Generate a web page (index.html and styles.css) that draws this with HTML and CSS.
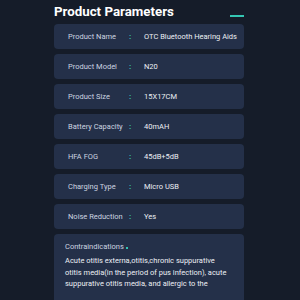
FILE: index.html
```html
<!DOCTYPE html>
<html lang="en">
<head>
    <meta charset="UTF-8">
    <meta name="viewport" content="width=device-width, initial-scale=1.0">
    <title>Product Parameters</title>
    <link rel="stylesheet" href="styles.css">
</head>
<body>
    <main class="params">
        <header class="params-head">
            <h1 class="params-title">Product Parameters</h1>
            <span class="params-dash"></span>
        </header>

        <ul class="param-list">
            <li class="param-row"><span class="param-label">Product Name</span><span class="param-sep">:</span><span class="param-value">OTC Bluetooth Hearing Aids</span></li>
            <li class="param-row"><span class="param-label">Product Model</span><span class="param-sep">:</span><span class="param-value">N20</span></li>
            <li class="param-row"><span class="param-label">Product Size</span><span class="param-sep">:</span><span class="param-value">15X17CM</span></li>
            <li class="param-row"><span class="param-label">Battery Capacity</span><span class="param-sep">:</span><span class="param-value">40mAH</span></li>
            <li class="param-row"><span class="param-label">HFA FOG</span><span class="param-sep">:</span><span class="param-value">45dB+5dB</span></li>
            <li class="param-row"><span class="param-label">Charging Type</span><span class="param-sep">:</span><span class="param-value">Micro USB</span></li>
            <li class="param-row"><span class="param-label">Noise Reduction</span><span class="param-sep">:</span><span class="param-value">Yes</span></li>
        </ul>

        <section class="contra">
            <h2 class="contra-title">Contraindications<span class="contra-dot"></span></h2>
            <p class="contra-text">Acute otitis externa,otitis,chronic suppurative otitis media(in the period of pus infection), acute suppurative otitis media, and allergic to the</p>
        </section>
    </main>
</body>
</html>
```

FILE: styles.css
```css
:root{
    --cor-bg: #151c29;
    --cor-card: #243049;
    --cor-teal: #34c6b3;
    --cor-label: #ccd4e0;
    --cor-value: #eceff4;

    --font-f: Roboto, "Liberation Sans", sans-serif;
}

*{
    margin: 0px;
    padding: 0px;
    box-sizing: border-box;
}

body{
    background-color: var(--cor-bg);
    font-family: var(--font-f);
}

.params{
    width: 190px;
    margin-left: 54px;
    padding-top: 4px;
}

.params-head{
    display: flex;
    justify-content: space-between;
    align-items: flex-start;
    height: 20px;
}

.params-title{
    color: white;
    font-size: 13.3px;
    font-weight: 700;
    line-height: 16px;
}

.params-dash{
    width: 14px;
    height: 2px;
    margin-top: 11px;
    background-color: var(--cor-teal);
}

.param-list{
    list-style: none;
    display: flex;
    flex-direction: column;
    gap: 5px;
}

.param-row{
    display: grid;
    grid-template-columns: 61px 15px 1fr;
    align-items: center;
    height: 25px;
    padding-left: 14px;
    background-color: var(--cor-card);
    border-radius: 4px;
    font-size: 7.5px;
}

.param-label{
    color: var(--cor-label);
    white-space: nowrap;
}

.param-sep{
    color: var(--cor-teal);
    font-weight: 700;
    font-size: 8px;
}

.param-value{
    color: var(--cor-value);
    white-space: nowrap;
}

.contra{
    margin-top: 5px;
    padding: 8px 11px 16px 11px;
    background-color: var(--cor-card);
    border-radius: 4px;
}

.contra-title{
    color: var(--cor-label);
    font-size: 7.5px;
    font-weight: 400;
    line-height: 10px;
    margin-bottom: 3px;
}

.contra-dot{
    display: inline-block;
    width: 2px;
    height: 2px;
    margin-left: 2px;
    background-color: var(--cor-teal);
}

.contra-text{
    color: var(--cor-value);
    font-size: 7.5px;
    line-height: 11.5px;
}
```
